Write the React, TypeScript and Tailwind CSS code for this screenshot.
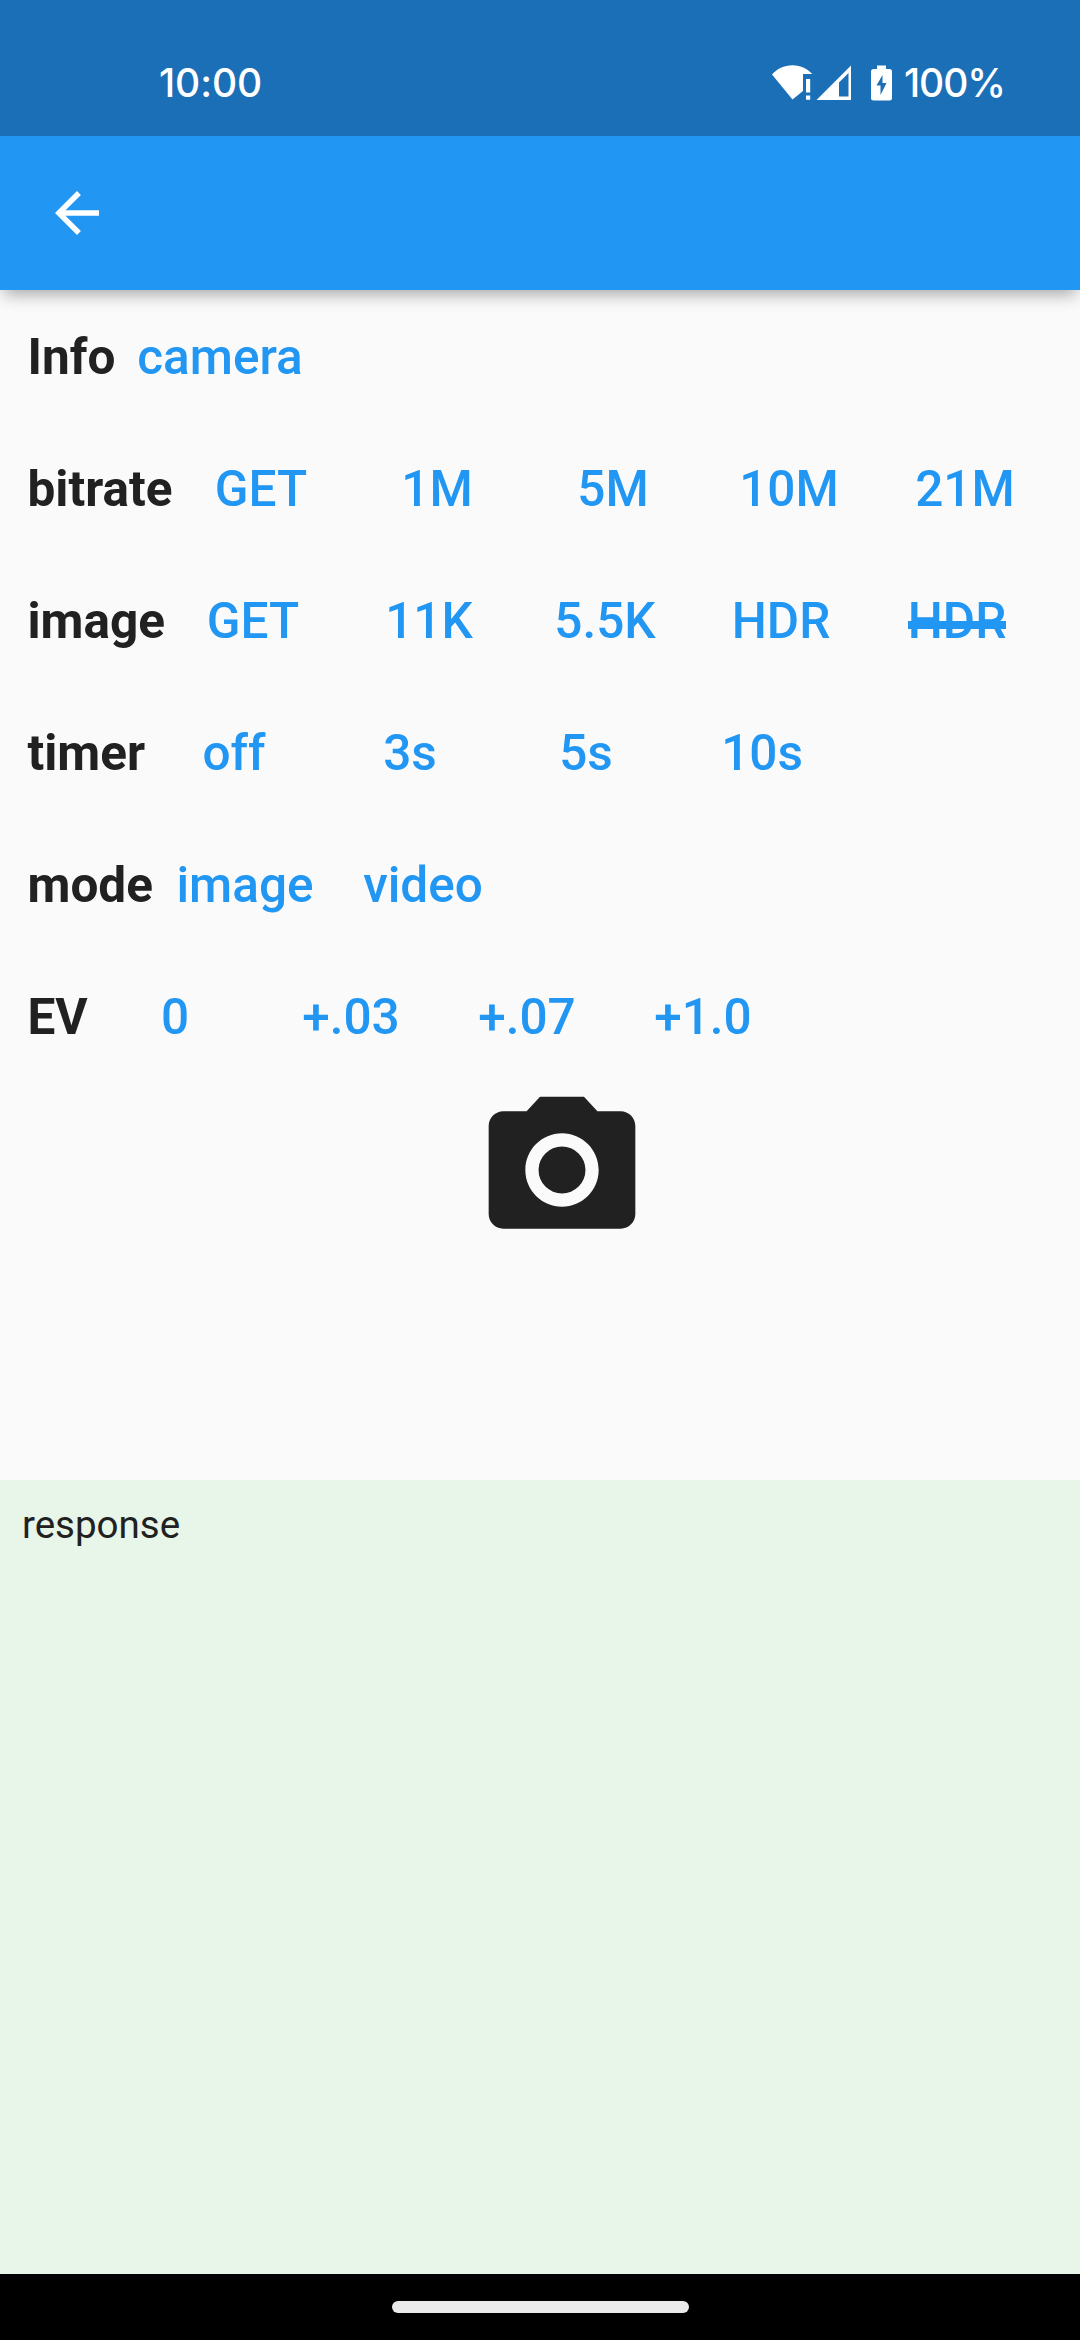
import React from "react";

type Item = { t: string; w: number; strike?: boolean };
type Line = { label: string; lw: number; items: Item[] };

const lines: Line[] = [
  { label: "Info", lw: 87.5, items: [{ t: "camera", w: 210 }] },
  { label: "bitrate", lw: 145.5, items: [{ t: "GET", w: 176 }, { t: "1M", w: 176 }, { t: "5M", w: 176 }, { t: "10M", w: 176 }, { t: "21M", w: 176 }] },
  { label: "image", lw: 137.5, items: [{ t: "GET", w: 176 }, { t: "11K", w: 176 }, { t: "5.5K", w: 176 }, { t: "HDR", w: 176 }, { t: "HDR", w: 176, strike: true }] },
  { label: "timer", lw: 118.5, items: [{ t: "off", w: 176 }, { t: "3s", w: 176 }, { t: "5s", w: 176 }, { t: "10s", w: 176 }] },
  { label: "mode", lw: 127.5, items: [{ t: "image", w: 180 }, { t: "video", w: 176 }] },
  { label: "EV", lw: 59.5, items: [{ t: "0", w: 176 }, { t: "+.03", w: 176 }, { t: "+.07", w: 176 }, { t: "+1.0", w: 176 }] },
];

function StatusBar() {
  return (
    <div className="relative z-10 flex h-[136px] shrink-0 items-start bg-[#1a6fb6] pr-[77px] pl-[159px] pt-[58px] font-['Inter',sans-serif] text-[39px] font-medium leading-[48px] text-white">
      <span className="mt-px tracking-[-0.1px]">10:00</span>
      <svg className="mt-[7px] ml-auto h-[36px] w-[80px]" viewBox="0 0 80 36" fill="#fff">
        <path d="M0 9.5C5 4 12 .3 20.500 .3S35.500 4 40.300 9H31v17L20.500 34.500z" />
        <path d="M34 14h4.200v13.500H34zM34 30.500h4.200v4.200H34z" />
        <path fillRule="evenodd" d="M79 .5V35H44.500zM76.500 8L67 17.500V31.500h9.500z" />
      </svg>
      <svg className="mt-[7px] ml-[19px] h-[36px] w-[21px]" viewBox="0 0 21 36" fill="#fff">
        <path fillRule="evenodd" d="M6 .5h9V4h3.500Q21 4 21 6.500V33q0 2.500-2.500 2.500h-16Q0 35.500 0 33V6.500Q0 4 2.500 4H6zM11.500 10L5.500 20.500h4V30L15.500 18h-4z" />
      </svg>
      <span className="mt-px ml-[12px] w-[99px] whitespace-nowrap tracking-[-1.1px]">100%</span>
    </div>
  );
}

export default function App() {
  return (
    <div className="flex h-[2340px] w-[1080px] flex-col overflow-hidden bg-[#fafafa] font-['Roboto',sans-serif] text-[#212121]">
      <StatusBar />
      <div className="flex h-[154px] shrink-0 items-center bg-[#2196f3] pl-[44px] shadow-[0_8px_16px_-4px_rgba(0,0,0,0.35)]">
        <svg className="h-[66px] w-[66px]" viewBox="0 0 24 24" fill="#fff">
          <path d="M20 11H7.830l5.590-5.590L12 4l-8 8 8 8 1.410-1.410L7.830 13H20v-2z" />
        </svg>
      </div>
      <div className="h-[1190px] shrink-0">
        {lines.map((l) => (
          <div key={l.label} className="flex h-[132px] items-center pt-[2px] pl-[27.5px] text-[49.500px]">
            <span className="whitespace-nowrap font-bold" style={{ width: l.lw }}>{l.label}</span>
            {l.items.map((i, k) => (
              <span key={k} className="text-center font-medium text-[#2196f3]" style={{ width: i.w }}>
                <span className="relative">
                  {i.t}
                  {i.strike && <span className="absolute inset-x-0 top-[29px] h-[8px] bg-[#2196f3]" />}
                </span>
              </span>
            ))}
          </div>
        ))}
        <svg className="ml-[474px] h-[176px] w-[176px]" viewBox="0 0 24 24" fill="#212121">
          <circle cx="12" cy="12" r="3.200" />
          <path d="M9 2L7.170 4H4c-1.100 0-2 .9-2 2v12c0 1.100.9 2 2 2h16c1.100 0 2-.9 2-2V6c0-1.100-.9-2-2-2h-3.170L15 2H9zm3 15c-2.760 0-5-2.240-5-5s2.240-5 5-5 5 2.240 5 5-2.240 5-5 5z" />
        </svg>
      </div>
      <div className="h-[794px] shrink-0 bg-[#e8f5e9] pt-[22px] pl-[22px] text-[38.500px] leading-[46px]">response</div>
      <div className="flex h-[66px] shrink-0 justify-center bg-black pt-[27px]">
        <div className="h-[12px] w-[297px] rounded-full bg-[#ebebeb]" />
      </div>
    </div>
  );
}
